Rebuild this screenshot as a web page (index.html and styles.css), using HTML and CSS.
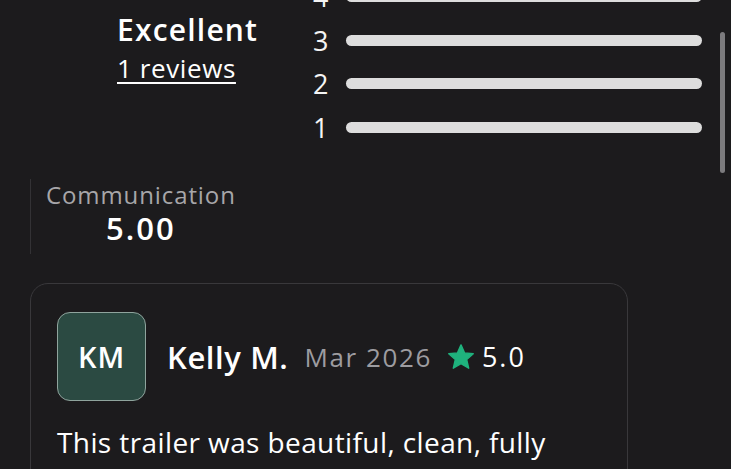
FILE: index.html
```html
<!DOCTYPE html>
<html>
<head>
<meta charset="utf-8">
<link rel="stylesheet" href="styles.css">
</head>
<body>
<div class="page">
  <section class="summary">
    <div class="overall">
      <div class="label">Excellent</div>
      <a class="count" href="#">1 reviews</a>
    </div>
    <div class="bars">
      <div class="row"><span class="num">4</span><span class="bar"></span></div>
      <div class="row"><span class="num">3</span><span class="bar"></span></div>
      <div class="row"><span class="num">2</span><span class="bar"></span></div>
      <div class="row"><span class="num">1</span><span class="bar"></span></div>
    </div>
  </section>

  <section class="category">
    <div class="cat-name">Communication</div>
    <div class="cat-score">5.00</div>
  </section>

  <article class="review">
    <header class="review-head">
      <div class="avatar">KM</div>
      <div class="name">Kelly M.</div>
      <div class="date">Mar 2026</div>
      <div class="stars">
        <svg class="star" viewBox="0 0 24 24" width="28" height="28"><path d="M12 1.6l3.1 6.9 7.4.7-5.6 5 1.7 7.4L12 17.8l-6.6 3.8 1.7-7.4-5.6-5 7.4-.7z" fill="#1fb27d" stroke="#1fb27d" stroke-width="1.2" stroke-linejoin="round"/></svg>
        <span class="score">5.0</span>
      </div>
    </header>
    <p class="body">This trailer was beautiful, clean, fully</p>
  </article>
</div>
<div class="scrollbar"></div>
</body>
</html>
```
FILE: styles.css
```css
html, body {
  margin: 0;
  padding: 0;
  background: #1c1b1d;
  overflow: hidden;
  height: 469px;
}
body {
  font-family: "Open Sans", "Noto Sans", sans-serif;
  color: #ffffff;
}
.page {
  margin-top: -25px;
}
.summary {
  display: flex;
}
.overall {
  width: 196px;
  padding-left: 117px;
  padding-top: 37px;
  display: flex;
  flex-direction: column;
  align-items: flex-start;
}
.label {
  font-size: 30px;
  font-weight: 600;
  line-height: 36px;
  letter-spacing: 1.2px;
}
.count {
  margin-top: 2px;
  color: #fff;
  font-size: 26px;
  font-weight: 500;
  line-height: 36px;
  letter-spacing: 0.6px;
  text-decoration: underline;
  text-underline-offset: 4px;
  text-decoration-thickness: 2px;
}
.bars {
  display: flex;
  flex-direction: column;
}
.row {
  height: 43.5px;
  display: flex;
  align-items: center;
}
.num {
  width: 33px;
  font-size: 27px;
  font-weight: 400;
  color: #f4f4f4;
}
.bar {
  width: 356px;
  height: 11px;
  border-radius: 6px;
  background: #dddddd;
}
.category {
  margin: 30px 0 0 30px;
  border-left: 1px solid #333235;
  padding: 1px 0 8px 15px;
  display: inline-flex;
  flex-direction: column;
  align-items: center;
}
.cat-name {
  color: #a7a6a9;
  font-size: 24px;
  line-height: 30px;
  letter-spacing: 0.9px;
}
.cat-score {
  font-size: 31px;
  font-weight: 600;
  line-height: 36px;
  letter-spacing: 2px;
}
.review {
  margin: 29px 0 0 30px;
  width: 598px;
  border: 1px solid #39383b;
  border-radius: 18px;
  padding: 28px 26px;
  box-sizing: border-box;
  height: 300px;
}
.review-head {
  display: flex;
  align-items: center;
}
.avatar {
  width: 89px;
  height: 89px;
  box-sizing: border-box;
  border: 1px solid #8fa49d;
  border-radius: 13px;
  background: #2b4a42;
  display: flex;
  align-items: center;
  justify-content: center;
  font-size: 29px;
  font-weight: 600;
  letter-spacing: 1px;
  margin-right: 21px;
}
.name {
  font-size: 31px;
  font-weight: 600;
  letter-spacing: 0.6px;
  margin-right: 16px;
}
.date {
  color: #9d9ca0;
  font-size: 26px;
  letter-spacing: 1.6px;
  margin-right: 15px;
}
.stars {
  display: flex;
  align-items: center;
  gap: 7px;
}
.score {
  font-size: 27px;
  letter-spacing: 2px;
}
.body {
  margin: 23px 0 0;
  font-size: 28px;
  line-height: 36px;
  letter-spacing: 0.4px;
}
.scrollbar {
  position: absolute;
  left: 720px;
  top: 32px;
  width: 5px;
  height: 141px;
  border-radius: 3px;
  background: #7c7b7e;
}
```
